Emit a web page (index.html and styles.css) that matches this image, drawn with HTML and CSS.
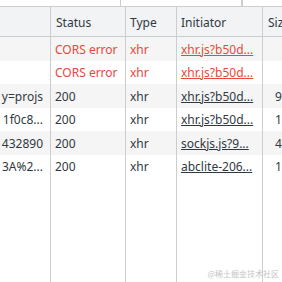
FILE: index.html
```html
<html>
    <head>
        <link rel="stylesheet" href="styles.css">
    </head>
    <body>
        <div class="topbar">
            <div class="tb-cell tb-a"></div>
            <div class="tb-cell tb-b"></div>
            <div class="tb-cell tb-c"></div>
        </div>
        <div class="grid">
            <div class="row head">
                <div class="cell c-name"></div>
                <div class="cell c-status">Status</div>
                <div class="cell c-type">Type</div>
                <div class="cell c-init">Initiator</div>
                <div class="cell c-size">Siz</div>
            </div>
            <div class="row odd err">
                <div class="cell c-name"><span></span></div>
                <div class="cell c-status">CORS error</div>
                <div class="cell c-type">xhr</div>
                <div class="cell c-init"><a>xhr.js?b50d...</a></div>
                <div class="cell c-size"></div>
            </div>
            <div class="row err">
                <div class="cell c-name"><span></span></div>
                <div class="cell c-status">CORS error</div>
                <div class="cell c-type">xhr</div>
                <div class="cell c-init"><a>xhr.js?b50d...</a></div>
                <div class="cell c-size"></div>
            </div>
            <div class="row odd">
                <div class="cell c-name"><span>y=projs</span></div>
                <div class="cell c-status">200</div>
                <div class="cell c-type">xhr</div>
                <div class="cell c-init"><a>xhr.js?b50d...</a></div>
                <div class="cell c-size num">9</div>
            </div>
            <div class="row">
                <div class="cell c-name"><span>1f0c8...</span></div>
                <div class="cell c-status">200</div>
                <div class="cell c-type">xhr</div>
                <div class="cell c-init"><a>xhr.js?b50d...</a></div>
                <div class="cell c-size num">1</div>
            </div>
            <div class="row odd">
                <div class="cell c-name"><span>432890</span></div>
                <div class="cell c-status">200</div>
                <div class="cell c-type">xhr</div>
                <div class="cell c-init"><a>sockjs.js?9...</a></div>
                <div class="cell c-size num">4</div>
            </div>
            <div class="row">
                <div class="cell c-name"><span>3A%2...</span></div>
                <div class="cell c-status">200</div>
                <div class="cell c-type">xhr</div>
                <div class="cell c-init"><a>abclite-206...</a></div>
                <div class="cell c-size num">1</div>
            </div>
            <div class="row filler">
                <div class="cell c-name"></div>
                <div class="cell c-status"></div>
                <div class="cell c-type"></div>
                <div class="cell c-init"></div>
                <div class="cell c-size"></div>
            </div>
        </div>
        <div class="watermark">@稀土掘金技术社区</div>
    </body>
</html>
```
FILE: styles.css
```css
html {
    height: 100%;
}
body {
    margin: 0;
    height: 100%;
    display: flex;
    flex-direction: column;
    overflow: hidden;
    font-family: "Noto Sans", "Open Sans", sans-serif;
    font-size: 12px;
    color: #303942;
    background-color: white;
    position: relative;
}
.topbar {
    height: 6px;
    display: flex;
    border-bottom: 1px solid #cbcdd1;
}
.tb-cell {
    border-right: 1px solid #cbcdd1;
}
.tb-a {
    width: 120px;
}
.tb-b {
    width: 120px;
}
.grid {
    flex: 1;
    display: flex;
    flex-direction: column;
}
.row {
    display: flex;
    height: 24px;
    align-items: stretch;
}
.row:nth-child(odd) {
    height: 23px;
}
.row.odd {
    background-color: #f5f5f5;
}
.row.head {
    height: 29px;
    background-color: #f1f3f4;
    border-bottom: 1px solid #cbcdd1;
}
.row.filler {
    flex: 1;
}
.cell {
    border-right: 1px solid #cbcdd1;
    display: flex;
    align-items: center;
    white-space: nowrap;
    overflow: hidden;
    padding-left: 4px;
    flex-shrink: 0;
    box-sizing: border-box;
}
.c-name {
    width: 51px;
    justify-content: flex-end;
    padding-left: 0;
    padding-right: 7px;
}
.c-status {
    width: 75px;
}
.c-type {
    width: 51px;
}
.c-init {
    width: 86px;
}
.c-size {
    width: 19px;
    border-right: none;
    padding-left: 5px;
}
.c-size.num {
    padding-left: 12px;
}
.head .cell {
    padding-top: 1px;
}
.head .c-status {
    padding-left: 5px;
}
.c-init a {
    text-decoration: underline;
    color: #303942;
}
.err .c-status,
.err .c-type,
.err .c-init a {
    color: #e8483c;
}
.watermark {
    position: absolute;
    right: 3px;
    bottom: 3px;
    font-size: 8px;
    color: #c4c4c4;
    font-family: "Noto Sans CJK SC", sans-serif;
}
```
